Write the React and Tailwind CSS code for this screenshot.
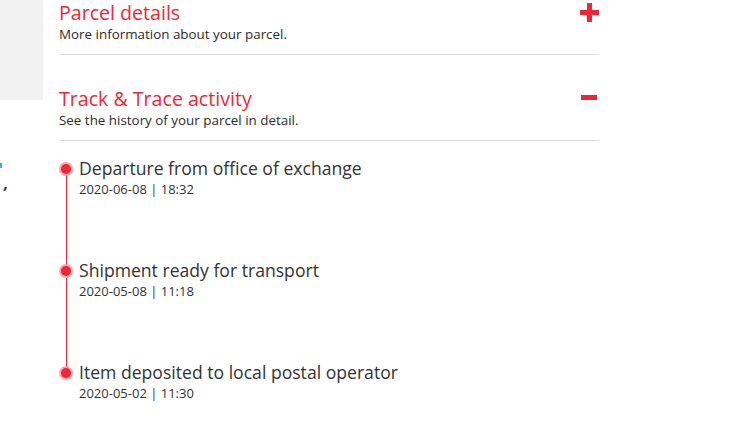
import React from 'react';

const events = [
  { title: 'Departure from office of exchange', date: '2020-06-08 | 18:32' },
  { title: 'Shipment ready for transport', date: '2020-05-08 | 11:18' },
  { title: 'Item deposited to local postal operator', date: '2020-05-02 | 11:30' },
];

function Plus() {
  return (
    <svg width="19" height="19" viewBox="0 0 19 19" className="block">
      <rect x="7" y="0" width="5" height="19" fill="#ee2737" />
      <rect x="0" y="7" width="19" height="5" fill="#ee2737" />
    </svg>
  );
}

function Minus() {
  return (
    <svg width="16" height="5" viewBox="0 0 16 5" className="block">
      <rect x="0" y="0" width="16" height="5" fill="#ee2737" />
    </svg>
  );
}

function Section({ title, subtitle, icon }) {
  return (
    <div className="border-b border-[#dcdcdc] pb-[12px]">
      <div className="flex justify-between items-start">
        <div>
          <h2 className="text-[19.6px] leading-[26px] text-[#ee2737]">{title}</h2>
          <p className="text-[13.4px] leading-[16px] text-[#2b2b2b]">{subtitle}</p>
        </div>
        {icon}
      </div>
    </div>
  );
}

export default function App() {
  return (
    <div
      className="flex w-[736px] h-[433px] bg-white overflow-hidden"
      style={{ fontFamily: '"Open Sans", sans-serif' }}
    >
      <div className="w-[43px] shrink-0">
        <div className="h-[100px] bg-[#f2f2f2]" />
        <div className="mt-[63px] w-[2px] h-[5px] bg-[#4aa3f0]" />
        <div className="mt-[10px] ml-[4px] text-[16px] leading-[10px] font-bold italic text-[#333]">,</div>
      </div>
      <div className="ml-[16px] w-[540px]">
        <Section title="Parcel details" subtitle="More information about your parcel." icon={<div className="mt-[3px]"><Plus /></div>} />
        <div className="mt-[31px]">
          <Section title="Track & Trace activity" subtitle="See the history of your parcel in detail." icon={<div className="mt-[9px] mr-[2px]"><Minus /></div>} />
        </div>
        <ul className="relative mt-[16px]">
          <div className="absolute left-[7px] top-[12px] h-[204px] w-px bg-[#ee2737]" />
          {events.map((e, i) => (
            <li key={i} className="relative flex items-start gap-[6px] h-[102px]">
              <span className="mt-[5px] w-[14px] h-[14px] rounded-full bg-[#f9a7ae] flex items-center justify-center shrink-0">
                <span className="w-[10px] h-[10px] rounded-full bg-[#ee2737]" />
              </span>
              <div>
                <div className="text-[17.6px] leading-[23px] text-[#333]">{e.title}</div>
                <div className="text-[13px] leading-[19px] text-[#333]">{e.date}</div>
              </div>
            </li>
          ))}
        </ul>
      </div>
    </div>
  );
}
